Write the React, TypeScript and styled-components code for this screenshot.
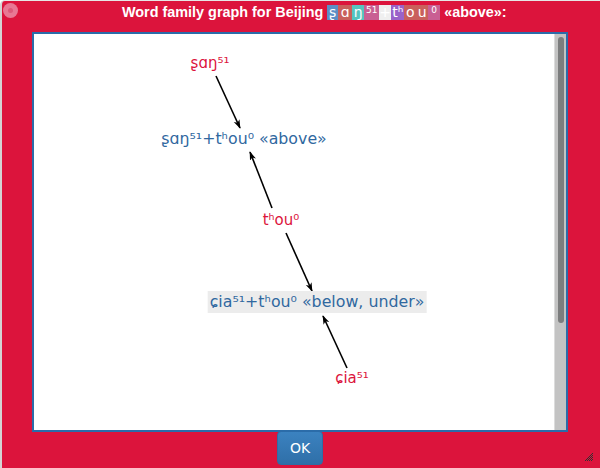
import { memo } from 'react'
import styled, { createGlobalStyle } from 'styled-components'

const GlobalStyle = createGlobalStyle`
	html, body {
		margin: 0;
		padding: 0;
		background: #ffffff;
	}
	#root {
		width: 600px;
		height: 468px;
	}
`

type Segment = { text: string; bg: string; width: number; small?: boolean }

const titleSegments: Segment[] = [
	{ text: 'ʂ', bg: '#5b8fc6', width: 11 },
	{ text: 'ɑ', bg: '#c9605c', width: 14 },
	{ text: 'ŋ', bg: '#55c5bf', width: 12 },
	{ text: '51', bg: '#c95f93', width: 15, small: true },
	{ text: '+', bg: '#efefef', width: 12 },
	{ text: 'tʰ', bg: '#9a62c9', width: 13 },
	{ text: 'o', bg: '#c9605c', width: 12 },
	{ text: 'u', bg: '#c9605c', width: 12 },
	{ text: '0', bg: '#c95f93', width: 12, small: true },
]

type GraphNode = {
	id: string
	label: string
	x: number
	y: number
	kind: 'root' | 'word'
	highlight?: boolean
}

// page coordinates, minus the panel offset (34px)
const nodes: GraphNode[] = [
	{ id: 'shang', label: 'ʂɑŋ⁵¹', x: 176, y: 29, kind: 'root' },
	{ id: 'above', label: 'ʂɑŋ⁵¹+tʰou⁰ «above»', x: 210, y: 105, kind: 'word' },
	{ id: 'thou', label: 'tʰou⁰', x: 247, y: 186, kind: 'root' },
	{ id: 'below', label: 'ɕia⁵¹+tʰou⁰ «below, under»', x: 283, y: 268, kind: 'word', highlight: true },
	{ id: 'xia', label: 'ɕia⁵¹', x: 318, y: 344, kind: 'root' },
]

const edges = [
	{ x1: 182, y1: 42, x2: 206, y2: 94 },
	{ x1: 238, y1: 174, x2: 216, y2: 118 },
	{ x1: 252, y1: 199, x2: 278, y2: 257 },
	{ x1: 313, y1: 334, x2: 289, y2: 282 },
]

export default function App() {
	return (
		<>
			<GlobalStyle />
			<Dialog>
				<TitleBar>
					<CloseButton aria-label="close">
						<CloseDot />
					</CloseButton>
					<Title>
						<span>Word family graph for Beijing</span>
						<Segments>
							{titleSegments.map((s, i) => (
								<Seg key={i} $bg={s.bg} $width={s.width} $small={s.small}>
									{s.text}
								</Seg>
							))}
						</Segments>
						<span>«above»:</span>
					</Title>
				</TitleBar>
				<Panel>
					<Graph />
					<ScrollTrack>
						<ScrollThumb />
					</ScrollTrack>
				</Panel>
				<ButtonRow>
					<OkButton>OK</OkButton>
				</ButtonRow>
				<Grip width="8" height="8" viewBox="0 0 8 8">
					{[
						[7, 0], [6, 1], [7, 2], [5, 2], [4, 3], [6, 3], [3, 4], [5, 4], [7, 4],
						[2, 5], [4, 5], [6, 5], [1, 6], [3, 6], [5, 6], [7, 6], [0, 7], [2, 7], [4, 7], [6, 7],
					].map(([x, y], i) => (
						<rect key={i} x={x} y={y} width="1" height="1" fill="#333" />
					))}
				</Grip>
			</Dialog>
		</>
	)
}

const Graph = memo(function Graph() {
	return (
		<Canvas>
			<Edges width="520" height="396">
				<defs>
					<marker
						id="arrow"
						viewBox="0 0 10 10"
						refX="9"
						refY="5"
						markerWidth="9"
						markerHeight="9"
						markerUnits="userSpaceOnUse"
						orient="auto"
					>
						<path d="M0 1.5 L10 5 L0 8.5 L2.5 5 Z" fill="#000" />
					</marker>
				</defs>
				{edges.map((e, i) => (
					<line
						key={i}
						x1={e.x1}
						y1={e.y1}
						x2={e.x2}
						y2={e.y2}
						stroke="#000"
						strokeWidth="1.6"
						markerEnd="url(#arrow)"
					/>
				))}
			</Edges>
			{nodes.map(n => (
				<Node
					key={n.id}
					$kind={n.kind}
					$highlight={n.highlight}
					style={{ left: n.x, top: n.y }}
				>
					{n.label}
				</Node>
			))}
		</Canvas>
	)
})

const Dialog = styled.div`
	position: relative;
	box-sizing: border-box;
	width: 600px;
	height: 468px;
	background: #dc143c;
	border-left: 2px solid #d4d4d4;
	border-top: 1px solid #e6e6e6;
	border-top-left-radius: 5px;
	display: flex;
	flex-direction: column;
	font-family: 'Liberation Sans', Arial, sans-serif;
`

const TitleBar = styled.div`
	position: relative;
	height: 31px;
	display: flex;
	justify-content: flex-start;
	align-items: flex-start;
	padding: 3px 0 0 120px;
	box-sizing: border-box;
`

const CloseButton = styled.div`
	position: absolute;
	left: 1px;
	top: 2px;
	width: 15px;
	height: 15px;
	border-radius: 50%;
	background: #e87894;
	display: flex;
	align-items: center;
	justify-content: center;
`

const CloseDot = styled.div`
	width: 5px;
	height: 5px;
	border-radius: 50%;
	background: #dd5a7a;
`

const Title = styled.div`
	color: #ffffff;
	font-weight: bold;
	font-size: 14.4px;
	line-height: 16px;
	white-space: nowrap;
	display: flex;
	align-items: center;
	gap: 4px;
`

const Segments = styled.span`
	display: inline-flex;
	height: 15px;
`

const Seg = styled.span<{ $bg: string; $width: number; $small?: boolean }>`
	display: inline-flex;
	justify-content: center;
	align-items: ${p => (p.$small ? 'flex-start' : 'center')};
	width: ${p => p.$width}px;
	height: 15px;
	background: ${p => p.$bg};
	color: #ffffff;
	font-family: 'DejaVu Sans', sans-serif;
	font-weight: normal;
	font-size: ${p => (p.$small ? '9px' : '14px')};
	line-height: ${p => (p.$small ? '11px' : '15px')};
`

const Panel = styled.div`
	position: relative;
	margin: 0 32px 0 30px;
	height: 400px;
	box-sizing: border-box;
	background: #ffffff;
	border: 2px solid #2b6ca9;
	display: flex;
`

const Canvas = styled.div`
	position: relative;
	flex: 1;
	overflow: hidden;
`

const Edges = styled.svg`
	position: absolute;
	left: 0;
	top: 0;
`

const Node = styled.div<{ $kind: 'root' | 'word'; $highlight?: boolean }>`
	position: absolute;
	transform: translate(-50%, -50%);
	white-space: nowrap;
	font-family: 'DejaVu Sans', sans-serif;
	font-size: ${p => (p.$kind === 'root' ? '15px' : '15.8px')};
	line-height: 22px;
	padding: 0 2px;
	color: ${p => (p.$kind === 'root' ? '#dc143c' : '#30689f')};
	background: ${p => (p.$highlight ? '#ececec' : 'transparent')};
`

const ScrollTrack = styled.div`
	width: 12px;
	background: #c3c3c3;
	border-left: 1px solid #dcdcdc;
	padding: 3px 2px;
	box-sizing: border-box;
`

const ScrollThumb = styled.div`
	width: 6px;
	margin: 0 auto;
	height: 286px;
	border-radius: 3px;
	background: #7c7d7e;
`

const ButtonRow = styled.div`
	display: flex;
	justify-content: center;
	margin-top: -1px;
`

const OkButton = styled.button`
	width: 46px;
	height: 34px;
	margin-right: 2px;
	border: 1px solid #2e6da4;
	border-radius: 4px;
	background: linear-gradient(#3b82c0, #2f6fa8);
	color: #ffffff;
	font-family: 'DejaVu Sans', sans-serif;
	font-size: 14px;
	padding: 0;
`

const Grip = styled.svg`
	position: absolute;
	right: 7px;
	bottom: 7px;
`
